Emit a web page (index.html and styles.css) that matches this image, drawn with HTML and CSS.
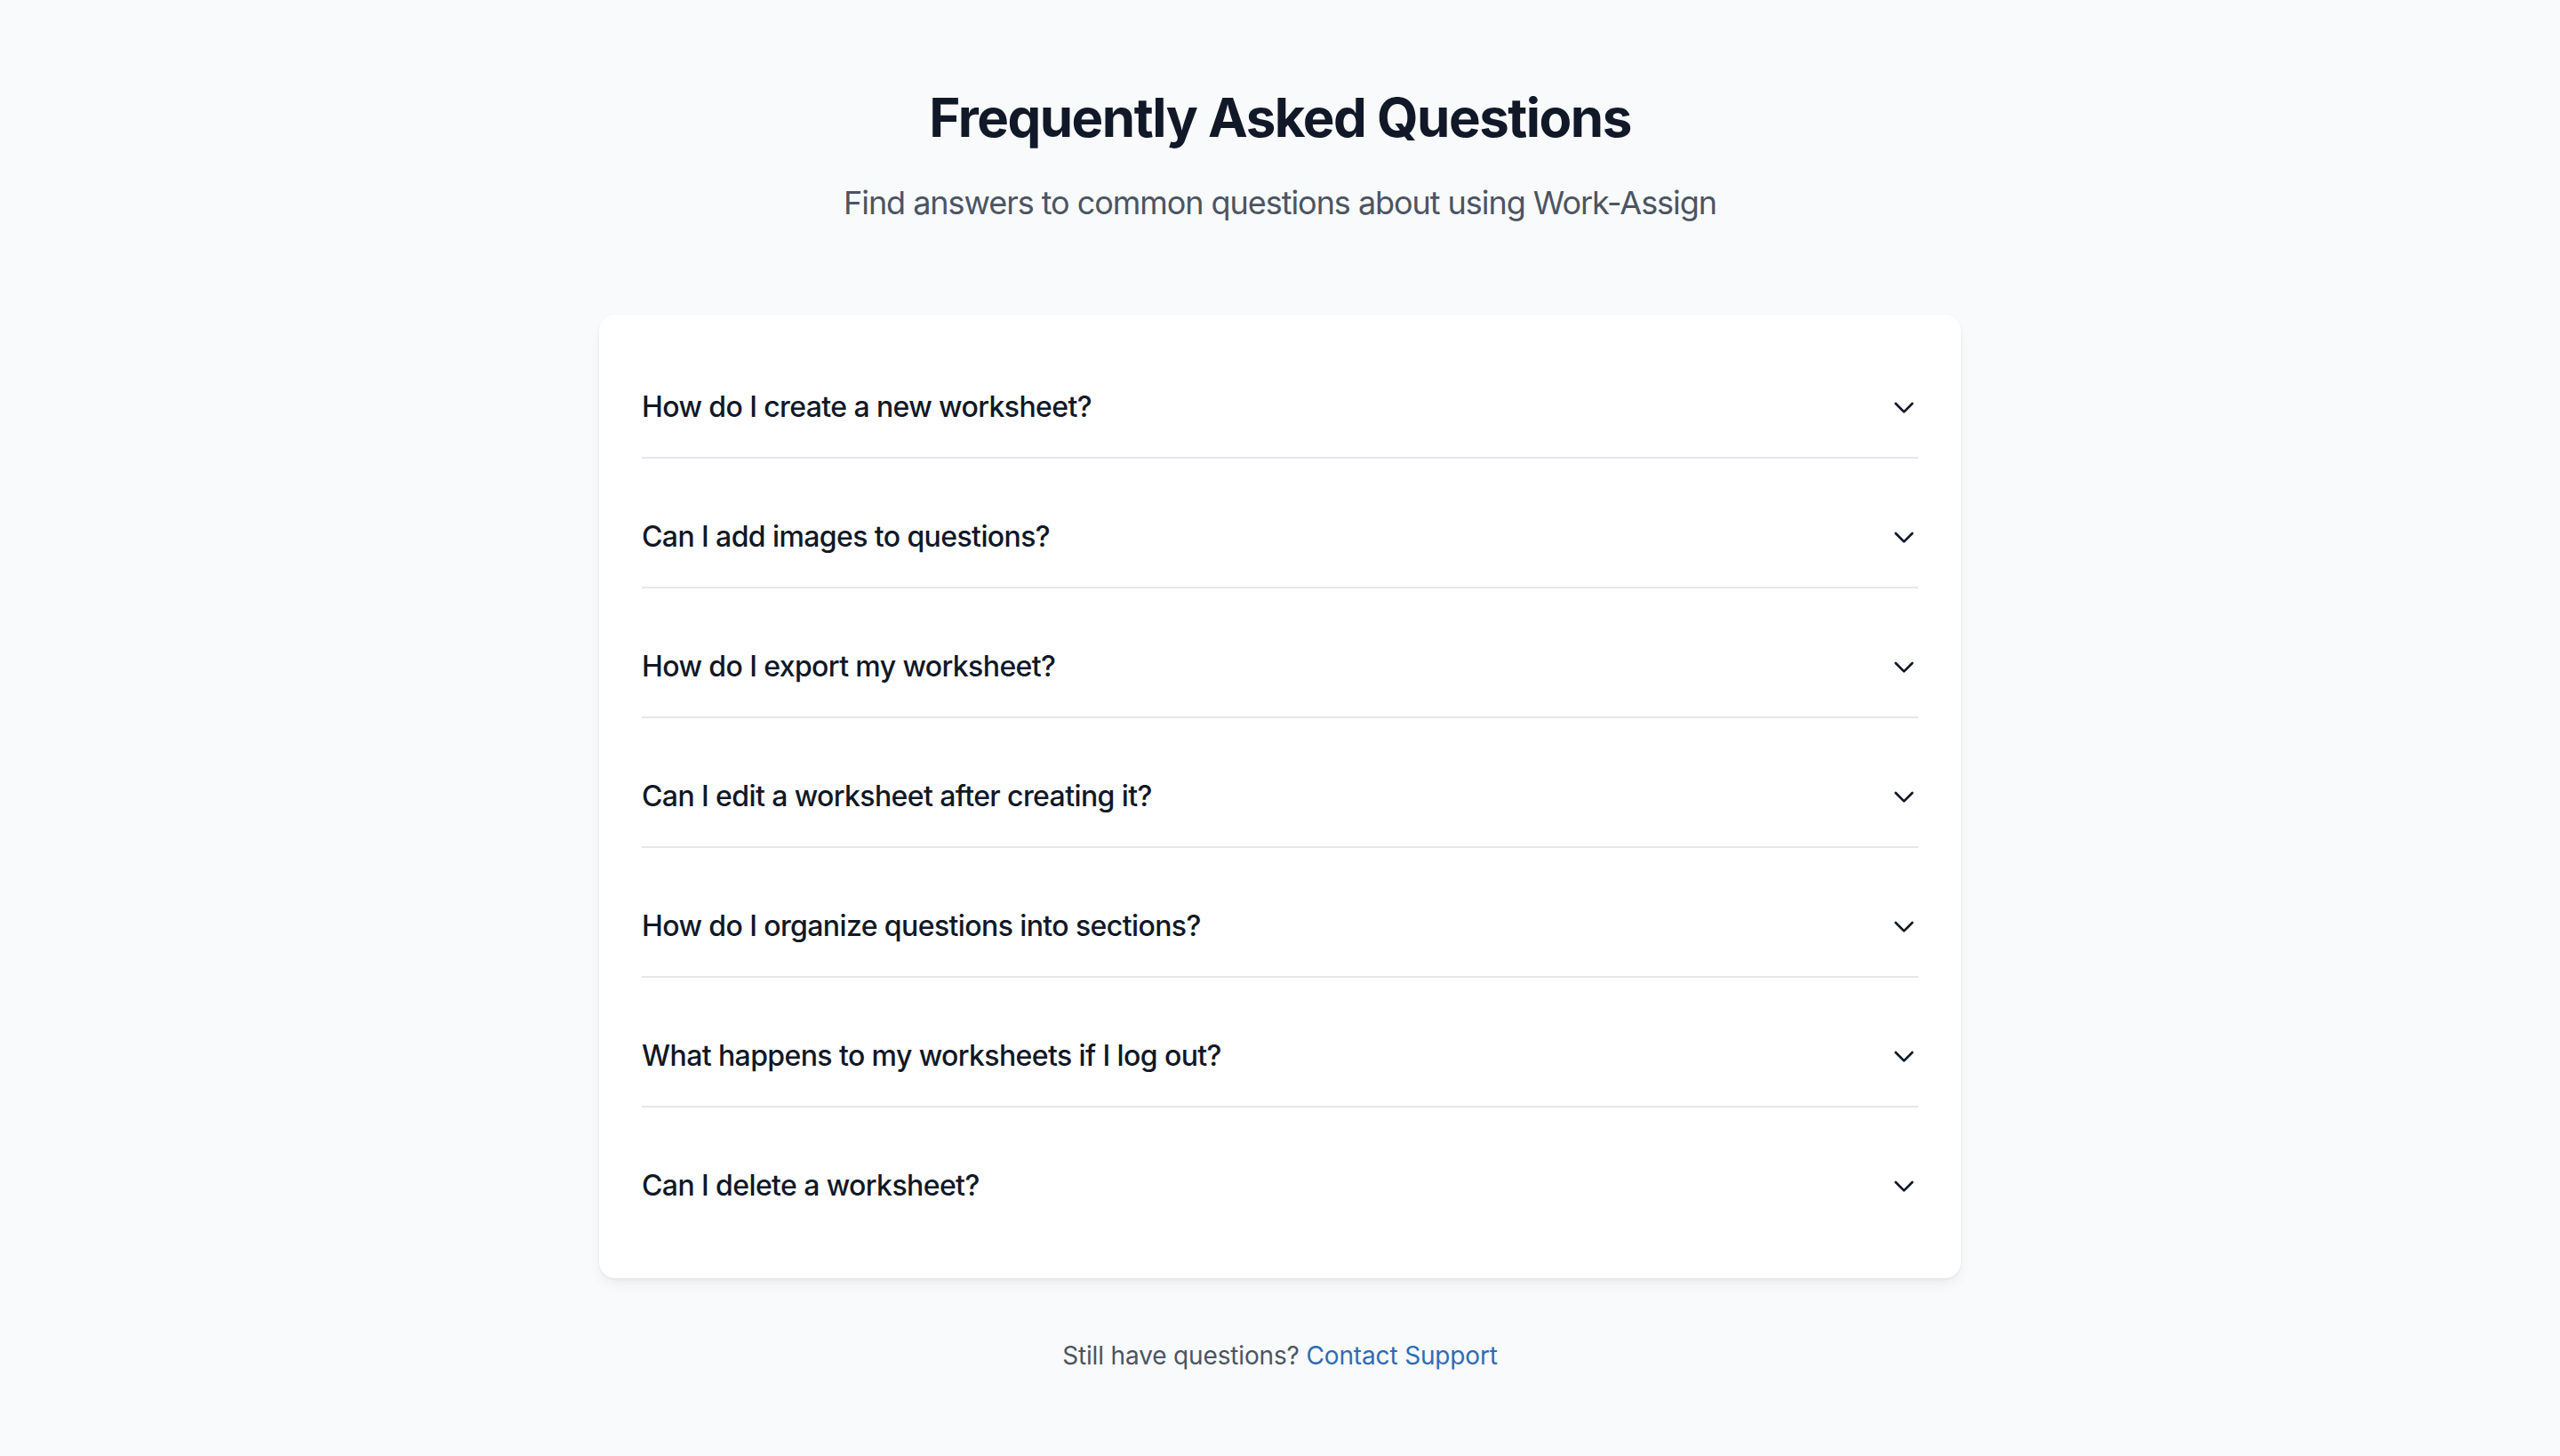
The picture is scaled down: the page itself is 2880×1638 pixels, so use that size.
FILE: index.html
```html
<!DOCTYPE html>
<html lang="en">
<head>
<meta charset="utf-8">
<title>FAQ</title>
<link rel="stylesheet" href="styles.css">
</head>
<body>
<main class="page">
  <header class="intro">
    <h1 class="title">Frequently Asked Questions</h1>
    <p class="subtitle">Find answers to common questions about using Work-Assign</p>
  </header>
  <section class="card">
    <div class="faq-item"><span class="question">How do I create a new worksheet?</span><svg class="chev" viewBox="0 0 24 24" fill="none" stroke="currentColor" stroke-width="2" stroke-linecap="round" stroke-linejoin="round"><path d="M19 9l-7 7-7-7"/></svg></div>
    <div class="faq-item"><span class="question">Can I add images to questions?</span><svg class="chev" viewBox="0 0 24 24" fill="none" stroke="currentColor" stroke-width="2" stroke-linecap="round" stroke-linejoin="round"><path d="M19 9l-7 7-7-7"/></svg></div>
    <div class="faq-item"><span class="question">How do I export my worksheet?</span><svg class="chev" viewBox="0 0 24 24" fill="none" stroke="currentColor" stroke-width="2" stroke-linecap="round" stroke-linejoin="round"><path d="M19 9l-7 7-7-7"/></svg></div>
    <div class="faq-item"><span class="question">Can I edit a worksheet after creating it?</span><svg class="chev" viewBox="0 0 24 24" fill="none" stroke="currentColor" stroke-width="2" stroke-linecap="round" stroke-linejoin="round"><path d="M19 9l-7 7-7-7"/></svg></div>
    <div class="faq-item"><span class="question">How do I organize questions into sections?</span><svg class="chev" viewBox="0 0 24 24" fill="none" stroke="currentColor" stroke-width="2" stroke-linecap="round" stroke-linejoin="round"><path d="M19 9l-7 7-7-7"/></svg></div>
    <div class="faq-item"><span class="question">What happens to my worksheets if I log out?</span><svg class="chev" viewBox="0 0 24 24" fill="none" stroke="currentColor" stroke-width="2" stroke-linecap="round" stroke-linejoin="round"><path d="M19 9l-7 7-7-7"/></svg></div>
    <div class="faq-item last"><span class="question">Can I delete a worksheet?</span><svg class="chev" viewBox="0 0 24 24" fill="none" stroke="currentColor" stroke-width="2" stroke-linecap="round" stroke-linejoin="round"><path d="M19 9l-7 7-7-7"/></svg></div>
  </section>
  <p class="footer">Still have questions? <a class="link" href="#">Contact Support</a></p>
</main>
</body>
</html>
```
FILE: styles.css
```css
* { box-sizing: border-box; }
html, body { margin: 0; padding: 0; }
body {
  background: #f9fafb;
  font-family: Inter, "Noto Sans", "Liberation Sans", sans-serif;
  color: #111827;
}
.page {
  max-width: 1532px;
  margin: 0 auto;
  padding: 96px 0 96px;
}
.intro { text-align: center; margin-bottom: 98px; }
.title {
  margin: 0;
  font-size: 60px;
  line-height: 72px;
  font-weight: 700;
  letter-spacing: -1.5px;
  color: #111827;
}
.subtitle {
  margin: 32px 0 0;
  font-size: 36px;
  line-height: 56px;
  letter-spacing: -1.05px;
  color: #4b5563;
}
.card {
  background: #fff;
  border-radius: 18px;
  padding: 48px;
  display: flex;
  flex-direction: column;
  gap: 32px;
  box-shadow: 0 1px 3px rgba(0,0,0,0.06), 0 8px 16px -4px rgba(0,0,0,0.08);
}
.faq-item {
  display: flex;
  align-items: center;
  justify-content: space-between;
  padding: 32px 0;
  border-bottom: 2px solid #e5e7eb;
}
.faq-item.last { border-bottom: none; }
.question {
  font-size: 32px;
  line-height: 48px;
  font-weight: 500;
  letter-spacing: -0.6px;
  color: #111827;
}
.chev { width: 32px; height: 32px; color: #111827; flex: none; }
.footer {
  margin: 67px 0 0;
  text-align: center;
  font-size: 28px;
  line-height: 40px;
  letter-spacing: -0.15px;
  color: #4b5563;
}
.link { color: #2d6cb5; text-decoration: none; }
```
